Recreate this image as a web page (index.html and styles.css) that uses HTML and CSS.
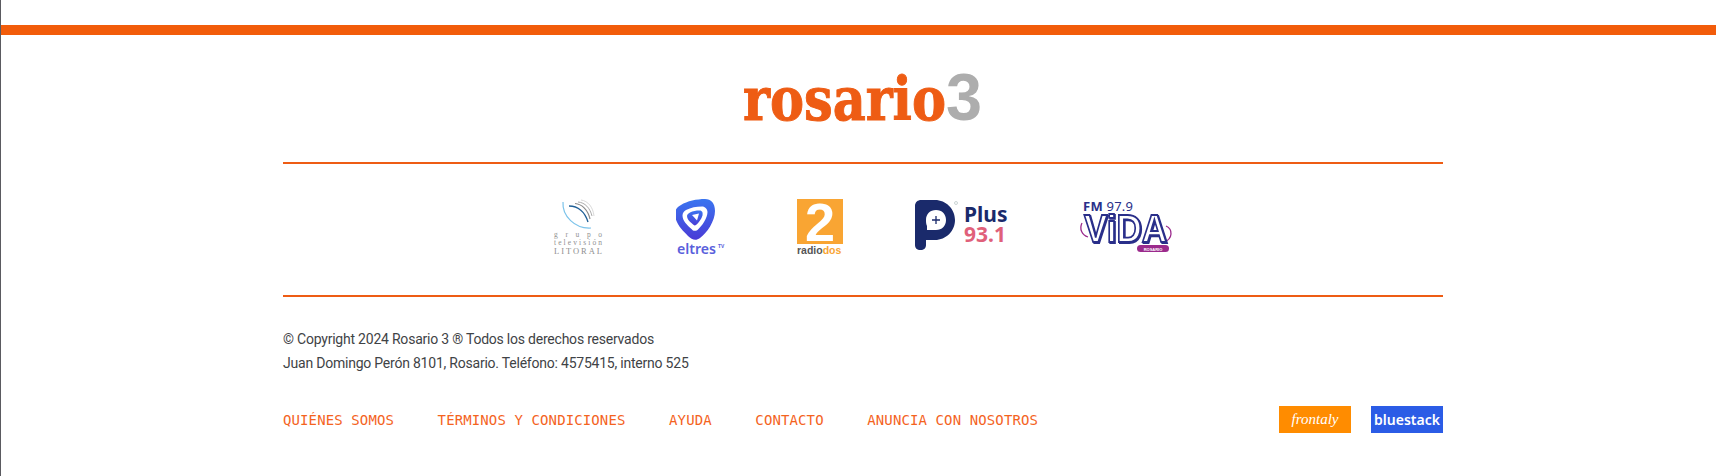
FILE: index.html
```html
<!DOCTYPE html>
<html lang="es">
<head>
<meta charset="utf-8">
<title>Rosario3</title>
<link rel="stylesheet" href="styles.css">
</head>
<body>
<footer class="footer">
  <div class="bar"></div>
  <div class="inner">
    <div class="brand">
      <svg class="brand-logo" width="240" height="85" viewBox="0 0 240 85">
        <text class="brand-word" x="0" y="65" textLength="203" lengthAdjust="spacingAndGlyphs">rosario</text>
        <text class="brand-num" x="203" y="65" textLength="36" lengthAdjust="spacingAndGlyphs">3</text>
      </svg>
    </div>
    <div class="logos">
      <svg width="52" height="58" viewBox="0 0 52 58">
        <path d="M10 3C9 17 22 30 38 29" fill="none" stroke="#7cc3ea" stroke-width="1.2"/>
        <path d="M16 7C25 7 32 13 35 23" fill="none" stroke="#1f5f96" stroke-width="1.4"/>
        <path d="M22 4.500C29 5 35 11 37 20" fill="none" stroke="#8a8a8a" stroke-width="1.2"/>
        <path d="M25 3C32 3.500 37 9 39 17" fill="none" stroke="#ababab" stroke-width="1"/>
        <path d="M28 1C35 2 40 8 41 17" fill="none" stroke="#cfcfcf" stroke-width=".8"/>
        <text class="gtv" x="1" y="38" textLength="48">grupo</text>
        <text class="gtv" x="1" y="46" textLength="48">televisión</text>
        <text class="gtv gtv-caps" x="1" y="55" textLength="48">LITORAL</text>
      </svg>
      <svg width="50" height="58" viewBox="0 0 50 58">
        <defs>
          <linearGradient id="el" x1="0" y1="0" x2="0" y2="1">
            <stop offset="0" stop-color="#3a75f0"/>
            <stop offset="1" stop-color="#4a3bd6"/>
          </linearGradient>
        </defs>
        <g transform="translate(-1 0)">
          <path fill="url(#el)" d="M6 6C12 2 22 0 30 0C36 0 40 4 40 12C40 22 32 34 25 39C21 42 17 41 13 37C7 31 0 24 0 15C0 11 2 8 6 6Z"/>
          <path fill="#fff" d="M11 11C16 8.500 21 7.500 27 7.500C30 7.500 32.500 10 32.500 13C32.500 19 27 27 22.500 31C20 32.500 18 32 16.500 30C12 26 7.500 21.500 7.500 16.500C7.500 14 9 12 11 11Z"/>
          <path fill="url(#el)" d="M15 13.500C18 12 21 11.500 24.500 11.500C27.500 11.500 28 14 27.500 16.500C26.500 20 23.500 24 21 26C19.500 27 18.500 26 17 24.500C14 22 12 20 12 17C12 15.500 13.500 14.500 15 13.500Z"/>
          <path fill="#fff" d="M17 16L24 14.500L22 21.500Z"/>
          <text class="el-word" x="2" y="55" textLength="39" lengthAdjust="spacingAndGlyphs">eltres</text>
          <text class="el-tv" x="43" y="49">TV</text>
        </g>
      </svg>
      <svg width="46" height="58" viewBox="0 0 46 58">
        <rect width="46" height="45" fill="#f9a533"/>
        <text class="two" x="23" y="42" text-anchor="middle">2</text>
        <text class="rd" x="0" y="55"><tspan class="rd-a">radio</tspan><tspan class="rd-b">dos</tspan></text>
      </svg>
      <svg width="94" height="58" viewBox="0 0 94 58">
        <g transform="translate(1 0)">
          <path fill="#1a2a6b" d="M0 7C0 3 3 1 6 1H20C31 1 40 10 40 21C40 32 31 41 20 41H11V46C11 49 9 51 5.500 51C2 51 0 49 0 46Z"/>
          <path fill="#fff" d="M21 11C27 11 31 15 31 21C31 27 27 31 21 31H12V27C11 25 11 23 11 21C11 15 15 11 21 11Z"/>
          <path d="M21 17V25M17 21H25" stroke="#1a2a6b" stroke-width="1.300" fill="none"/>
          <circle cx="41" cy="4" r="1.500" fill="none" stroke="#9aa" stroke-width=".5"/>
          <text class="pl-a" x="49" y="23">Plus</text>
          <text class="pl-b" x="49" y="43">93.1</text>
        </g>
      </svg>
      <svg width="94" height="58" viewBox="0 0 94 58">
        <g transform="translate(-2 0)">
          <path d="M5 24C2 30 5 36 11 38" fill="none" stroke="#9b2a8c" stroke-width="1.300"/>
          <path d="M89 27C96 30 96 40 87 43" fill="none" stroke="#9b2a8c" stroke-width="1.300"/>
          <text class="v-fm" x="6" y="12" textLength="50">FM <tspan class="v-fq">97.9</tspan></text>
          <text class="v-word" x="7" y="43" textLength="83" lengthAdjust="spacingAndGlyphs">ViDA</text>
          <rect x="60" y="46" width="32" height="7" rx="3.500" fill="#9b2a8c"/>
          <text class="v-ros" x="76" y="51.500" text-anchor="middle">ROSARIO</text>
        </g>
      </svg>
    </div>
    <div class="legal">
      <p>© Copyright 2024 Rosario 3 ® Todos los derechos reservados</p>
      <p>Juan Domingo Perón 8101, Rosario. Teléfono: 4575415, interno 525</p>
    </div>
    <div class="bottom">
      <nav class="nav">
        <a href="#">QUIÉNES SOMOS</a>
        <a href="#">TÉRMINOS Y CONDICIONES</a>
        <a href="#">AYUDA</a>
        <a href="#">CONTACTO</a>
        <a href="#">ANUNCIA CON NOSOTROS</a>
      </nav>
      <div class="badges">
        <span class="badge badge-f">frontaly</span>
        <span class="badge badge-b">bluestack</span>
      </div>
    </div>
  </div>
</footer>
</body>
</html>
```

FILE: styles.css
```css
* { box-sizing: border-box; }
html, body { margin: 0; padding: 0; }
body {
  height: 476px;
  background: #fff;
  border-left: 1px solid #5a5a60;
  overflow: hidden;
  font-family: "Roboto", sans-serif;
}
.footer { padding-top: 25px; }
.bar { height: 10px; background: #f25c0a; }
.inner { margin-left: 282px; width: 1160px; }
.brand {
  display: flex;
  justify-content: center;
  padding-top: 20px;
  height: 129px;
  border-bottom: 2px solid #ee5c14;
}
.brand-logo { display: block; }
.brand-word {
  font: 700 60px "DejaVu Serif", serif;
  fill: #ee5c14;
  stroke: #ee5c14;
  stroke-width: 1;
}
.brand-num { font: 700 66px "Liberation Sans", sans-serif; fill: #adadad; }
.logos {
  display: flex;
  justify-content: center;
  align-items: flex-start;
  gap: 71px;
  height: 133px;
  padding-top: 35px;
  border-bottom: 2px solid #ee5c14;
}
.logos svg { display: block; flex: none; }
.gtv { font: 400 7.500px "Liberation Serif", serif; fill: #8f8f8f; }
.gtv-caps { font-size: 8.500px; }
.el-word { font: 600 14px "Noto Sans", sans-serif; fill: #5a5fdc; }
.el-tv { font: 700 5px "Noto Sans", sans-serif; fill: #5a5fdc; }
.two { font: 700 54px "Liberation Sans", sans-serif; fill: #fff; }
.rd { font: 700 10.500px "Liberation Sans", sans-serif; }
.rd-a { fill: #555; }
.rd-b { fill: #f9a533; }
.pl-a { font: 700 21px "Noto Sans", sans-serif; fill: #1a2a6b; }
.pl-b { font: 700 21px "Noto Sans", sans-serif; fill: #e0607a; }
.v-fm { font: 700 13px "Noto Sans", sans-serif; fill: #2a2f8a; }
.v-fq { font-weight: 400; }
.v-word {
  font: 700 38px "Liberation Sans", sans-serif;
  fill: #fff;
  stroke: #2a2f8a;
  stroke-width: 1.800;
  filter: drop-shadow(1px 1.500px 0 #2a2f8a);
}
.v-ros { font: 700 4px "Liberation Sans", sans-serif; fill: #fff; }
.legal {
  padding-top: 30px;
  font-size: 14px;
  line-height: 24px;
  letter-spacing: -.22px;
  color: #3f4346;
}
.legal p { margin: 0; }
.bottom {
  display: flex;
  justify-content: space-between;
  align-items: center;
  margin-top: 31px;
}
.nav { display: flex; gap: 43.600px; }
.nav a {
  font: 400 14px "DejaVu Sans Mono", monospace;
  letter-spacing: .11px;
  color: #f4631e;
  text-decoration: none;
}
.badges { display: flex; gap: 20px; }
.badge {
  width: 72px;
  height: 27px;
  display: flex;
  align-items: center;
  justify-content: center;
  color: #fff;
}
.badge-f { background: #ff8c00; font: italic 400 15px "Liberation Serif", serif; }
.badge-b { background: #2b5ce6; font: 600 14px "Noto Sans", sans-serif; }
```
